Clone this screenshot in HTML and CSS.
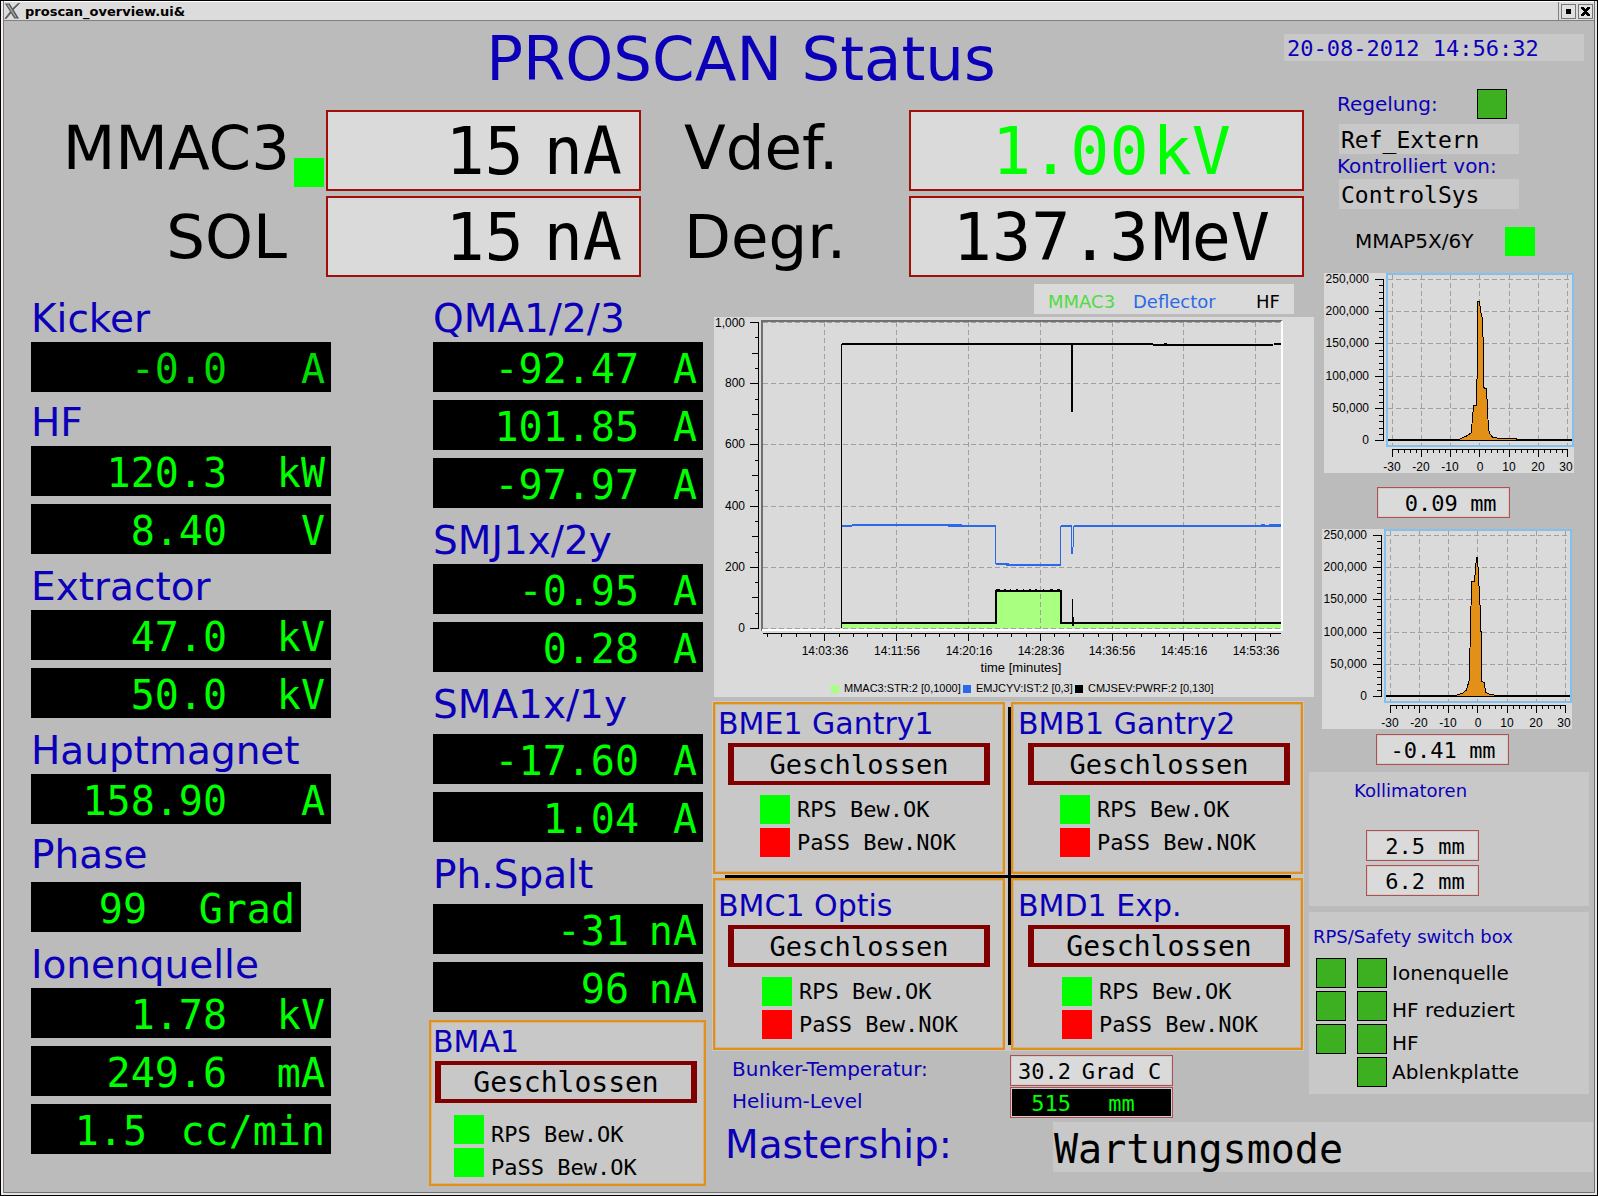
FILE: index.html
```
<!DOCTYPE html>
<html lang="de">
<head>
<meta charset="utf-8">
<title>proscan_overview.ui&amp;</title>
<link rel="stylesheet" href="styles.css">
</head>
<body>
<div class="window">
  <div class="titlebar">
    <svg class="titlebar-logo" viewBox="0 0 17 16" aria-hidden="true"><path d="M1 0h5l10 16h-5z" fill="#555"/><path d="M15 0h1.500L9 7.500 8.300 6.300zM1 16h1.500L8 9.200 7.300 8z" fill="#555" stroke="#666" stroke-width="1"/><path d="M3 1h2l8.500 14h-1.500z" fill="#aaa"/></svg>
    <span class="titlebar-text">proscan_overview.ui&amp;</span>
    <div class="titlebar-buttons">
      <button type="button" aria-label="Maximieren"><svg viewBox="0 0 11 11"><path d="M3 3h5v5H3z"/></svg></button>
      <button type="button" aria-label="Schliessen"><svg viewBox="0 0 11 11"><path d="M1 1h3v1h1v1h1V2h1V1h3v2H9v1H8v1H7v1h1v1h1v1h1v2H7V9H6V8H5v1H4v1H1V8h1V7h1V6h1V5H3V4H2V3H1z"/></svg></button>
    </div>
  </div>

  <header class="header">
    <h1>PROSCAN Status</h1>
    <time class="field clock">20-08-2012 14:56:32</time>
  </header>

  <main class="board">
    <section class="beam">
      <div class="beam-label beam-label-right beam-label-lamp"><span>MMAC3</span><i class="led led-on beam-led"></i></div>
      <div class="beam-value beam-current"><span>15</span><span>nA</span></div>
      <div class="beam-label beam-label-lamp">Vdef.</div>
      <div class="beam-value beam-voltage is-live"><span class="num">1.00</span><span>kV</span></div>
      <div class="beam-label beam-label-right beam-label-plain"><span>SOL</span></div>
      <div class="beam-value beam-current"><span>15</span><span>nA</span></div>
      <div class="beam-label">Degr.</div>
      <div class="beam-value beam-voltage"><span class="num">137.3</span><span>MeV</span></div>
    </section>

    <section class="readings readings-main">
      <div class="group">
        <h2>Kicker</h2>
        <div class="readout is-dim"><span>-0.0</span><span>A</span></div>
      </div>
      <div class="group">
        <h2>HF</h2>
        <div class="readout"><span>120.3</span><span>kW</span></div>
        <div class="readout"><span>8.40</span><span>V</span></div>
      </div>
      <div class="group spaced">
        <h2>Extractor</h2>
        <div class="readout"><span>47.0</span><span>kV</span></div>
        <div class="readout"><span>50.0</span><span>kV</span></div>
      </div>
      <div class="group spaced">
        <h2>Hauptmagnet</h2>
        <div class="readout"><span>158.90</span><span>A</span></div>
      </div>
      <div class="group tall">
        <h2>Phase</h2>
        <div class="readout readout-phase"><span>99</span><span>Grad</span></div>
      </div>
      <div class="group spaced">
        <h2>Ionenquelle</h2>
        <div class="readout"><span>1.78</span><span>kV</span></div>
        <div class="readout"><span>249.6</span><span>mA</span></div>
        <div class="readout readout-flow"><span>1.5</span><span>cc/min</span></div>
      </div>
    </section>

    <section class="readings readings-magnets">
      <div class="group">
        <h2>QMA1/2/3</h2>
        <div class="readout"><span>-92.47</span><span>A</span></div>
        <div class="readout"><span>101.85</span><span>A</span></div>
        <div class="readout"><span>-97.97</span><span>A</span></div>
      </div>
      <div class="group spaced">
        <h2>SMJ1x/2y</h2>
        <div class="readout"><span>-0.95</span><span>A</span></div>
        <div class="readout"><span>0.28</span><span>A</span></div>
      </div>
      <div class="group spaced tall">
        <h2>SMA1x/1y</h2>
        <div class="readout"><span>-17.60</span><span>A</span></div>
        <div class="readout"><span>1.04</span><span>A</span></div>
      </div>
      <div class="group spaced tall">
        <h2>Ph.Spalt</h2>
        <div class="readout readout-slit"><span>-31</span><span>nA</span></div>
        <div class="readout readout-slit"><span>96</span><span>nA</span></div>
      </div>
      <div class="stop stop-bma">
        <h3>BMA1</h3>
        <div class="stop-state wide">Geschlossen</div>
        <ul class="checks">
          <li><i class="led led-on"></i><span>RPS Bew.OK</span></li>
          <li><i class="led led-on"></i><span>PaSS Bew.OK</span></li>
        </ul>
      </div>
    </section>

    <section class="center">
      <div class="trend-key"><span class="key-mmac">MMAC3</span><span class="key-defl">Deflector</span><span class="key-hf">HF</span></div>
      <svg class="trend" viewBox="0 0 600 380" role="img" aria-label="Trend MMAC3, Deflector, HF">
        <path class="fill-mmac" d="M128 306H281V274H347V306H567V311H128Z"/>
        <path class="grid" d="M110.500 5V312M182.500 5V312M254.500 5V312M326.500 5V312M398.500 5V312M469.500 5V312M541.500 5V312M49 5.500H567M49 66.500H567M49 127.500H567M49 189.500H567M49 250.500H567M49 311.500H567"/>
        <path class="line-defl" d="M128 209H138M138 208H248M234 209H282M282 247H295M292 248H347M347 209H358M360 209H567M547 208H551M555 208H567"/>
        <path class="line-defl line-step" d="M281.500 209V247M346.500 248V209M357.500 209V237M358.500 237V230M359.500 230V209"/>
        <path class="line-black" d="M128 306H281.500V273.500H346.500V306H567M128 27H439M439 28H559M450 27H453M560 27H567M358 27V95"/>
        <path class="line-thin" d="M127.500 311V27M358.500 282V309M359.500 300V309"/>
        <path class="line-thin" d="M282 272.500H286M290 272.500H292M296 272.500H297M302 272.500H304M309 272.500H310M315 272.500H317M321 272.500H323M329 272.500H330M336 272.500H339M343 272.500H346"/>
        <path class="edge-dark" d="M47 4H568M48 3V314"/>
        <path class="edge-light" d="M48 313H568M567.500 4V314"/>
        <path class="axis" d="M44.500 5V312M36 5.500H45M36 66.500H45M36 127.500H45M36 189.500H45M36 250.500H45M36 311.500H45M38 36.500H45M38 97.500H45M38 158.500H45M38 219.500H45M38 280.500H45M41 20.500H45M41 51.500H45M41 82.500H45M41 112.500H45M41 143.500H45M41 173.500H45M41 204.500H45M41 235.500H45M41 265.500H45M41 296.500H45"/>
        <path class="axis" d="M49 316.500H567M110.500 316V324M182.500 316V324M254.500 316V324M326.500 316V324M398.500 316V324M469.500 316V324M541.500 316V324M53.500 316V320M67.500 316V320M82.500 316V320M96.500 316V320M125.500 316V320M139.500 316V320M153.500 316V320M168.500 316V320M197.500 316V320M211.500 316V320M225.500 316V320M240.500 316V320M269.500 316V320M283.500 316V320M297.500 316V320M312.500 316V320M340.500 316V320M355.500 316V320M369.500 316V320M384.500 316V320M412.500 316V320M427.500 316V320M441.500 316V320M455.500 316V320M484.500 316V320M498.500 316V320M513.500 316V320M527.500 316V320M556.500 316V320"/>
        <g class="tick tick-y"><text x="31" y="10">1,000</text><text x="31" y="70">800</text><text x="31" y="131">600</text><text x="31" y="193">400</text><text x="31" y="254">200</text><text x="31" y="315">0</text></g>
        <g class="tick tick-x"><text x="111" y="338">14:03:36</text><text x="183" y="338">14:11:56</text><text x="255" y="338">14:20:16</text><text x="327" y="338">14:28:36</text><text x="398" y="338">14:36:56</text><text x="470" y="338">14:45:16</text><text x="542" y="338">14:53:36</text><text class="axis-title" x="307" y="355">time [minutes]</text></g>
        <g class="caption"><path class="fill-mmac" d="M117 368h8v8h-8z"/><text x="130" y="375">MMAC3:STR:2 [0,1000]</text><path class="fill-defl" d="M249 368h8v8h-8z"/><text x="262" y="375">EMJCYV:IST:2 [0,3]</text><path d="M361 368h8v8h-8z"/><text x="374" y="375">CMJSEV:PWRF:2 [0,130]</text></g>
      </svg>
      <div class="stops">
        <div class="stop">
          <h3>BME1 Gantry1</h3>
          <div class="stop-state">Geschlossen</div>
          <ul class="checks">
            <li><i class="led led-on"></i><span>RPS Bew.OK</span></li>
            <li><i class="led led-bad"></i><span>PaSS Bew.NOK</span></li>
          </ul>
        </div>
        <div class="stop stop-right">
          <h3>BMB1 Gantry2</h3>
          <div class="stop-state">Geschlossen</div>
          <ul class="checks">
            <li><i class="led led-on"></i><span>RPS Bew.OK</span></li>
            <li><i class="led led-bad"></i><span>PaSS Bew.NOK</span></li>
          </ul>
        </div>
        <div class="stop stop-lower">
          <h3>BMC1 Optis</h3>
          <div class="stop-state">Geschlossen</div>
          <ul class="checks">
            <li><i class="led led-on"></i><span>RPS Bew.OK</span></li>
            <li><i class="led led-bad"></i><span>PaSS Bew.NOK</span></li>
          </ul>
        </div>
        <div class="stop stop-lower stop-right">
          <h3>BMD1 Exp.</h3>
          <div class="stop-state wide">Geschlossen</div>
          <ul class="checks">
            <li><i class="led led-on"></i><span>RPS Bew.OK</span></li>
            <li><i class="led led-bad"></i><span>PaSS Bew.NOK</span></li>
          </ul>
        </div>
      </div>
      <div class="bunker">
        <span class="note">Bunker-Temperatur:</span>
        <div class="meter meter-bunker"><span>30.2</span><span>Grad C</span></div>
        <span class="note">Helium-Level</span>
        <div class="meter meter-bunker meter-dark"><span>515</span><span>mm</span></div>
      </div>
    </section>

    <aside class="side">
      <div class="side-row"><span class="note">Regelung:</span><i class="led led-framed"></i></div>
      <div class="field side-field">Ref_Extern</div>
      <div class="note side-note">Kontrolliert von:</div>
      <div class="field side-field">ControlSys</div>
      <div class="side-row side-row-profile"><span class="note note-black">MMAP5X/6Y</span><i class="led led-on"></i></div>

      <svg class="profile" viewBox="0 0 250 200" role="img" aria-label="Profil X">
        <path class="grid" d="M68.500 2V172M97.500 2V172M126.500 2V172M155.500 2V172M185.500 2V172M214.500 2V172M243.500 2V172M64 6.500H248M64 38.500H248M64 70.500H248M64 103.500H248M64 135.500H248"/>
        <path class="peak" d="M119 167.500V166H136L142.500 163L147 160L148.500 146L149.500 132.500H152.500L153.500 81V28.500H155.500L156.500 38L158.500 46L159.500 81V114.500L162.500 116L163.500 136L164.500 156L166 161L168.500 164L175 165.500L192 166V167.500Z"/>
        <path class="base" d="M64 167H119M192 167H248"/>
        <rect class="frame" x="63" y="1" width="186" height="172"/>
        <path class="axis" d="M59.500 6V168M51 6.500H60M51 38.500H60M51 70.500H60M51 103.500H60M51 135.500H60M51 167.500H60M55 12.500H60M55 19.500H60M55 25.500H60M55 32.500H60M55 45.500H60M55 51.500H60M55 58.500H60M55 64.500H60M55 77.500H60M55 83.500H60M55 90.500H60M55 96.500H60M55 109.500H60M55 116.500H60M55 122.500H60M55 129.500H60M55 142.500H60M55 148.500H60M55 155.500H60M55 161.500H60"/>
        <path class="axis" d="M68 176.500H244M68.500 176V184M97.500 176V184M126.500 176V184M155.500 176V184M185.500 176V184M214.500 176V184M243.500 176V184M74.500 176V180M80.500 176V180M86.500 176V180M92.500 176V180M103.500 176V180M109.500 176V180M115.500 176V180M121.500 176V180M132.500 176V180M138.500 176V180M144.500 176V180M150.500 176V180M161.500 176V180M167.500 176V180M173.500 176V180M179.500 176V180M191.500 176V180M197.500 176V180M203.500 176V180M209.500 176V180M220.500 176V180M226.500 176V180M232.500 176V180M238.500 176V180"/>
        <g class="tick tick-y"><text x="45" y="10">250,000</text><text x="45" y="42">200,000</text><text x="45" y="74">150,000</text><text x="45" y="107">100,000</text><text x="45" y="139">50,000</text><text x="45" y="171">0</text></g>
        <g class="tick tick-x"><text x="68" y="198">-30</text><text x="97" y="198">-20</text><text x="126" y="198">-10</text><text x="156" y="198">0</text><text x="185" y="198">10</text><text x="214" y="198">20</text><text x="242" y="198">30</text></g>
      </svg>
      <div class="meter meter-profile"><span>0.09</span><span>mm</span></div>

      <svg class="profile profile-second" viewBox="0 0 250 200" role="img" aria-label="Profil Y">
        <path class="grid" d="M68.500 2V172M97.500 2V172M126.500 2V172M155.500 2V172M185.500 2V172M214.500 2V172M243.500 2V172M64 6.500H248M64 38.500H248M64 70.500H248M64 103.500H248M64 135.500H248"/>
        <path class="peak" d="M113 167.500V166H135L141 164L144.500 161L147 152L148.500 102V103L149.500 52.500H152.500L153.500 40L154.500 28.500H155.500L156.500 47L157.500 66L158.500 85L159.500 119V152L162.500 154L163.500 163L167 165L172 166H190V167.500Z"/>
        <path class="base" d="M64 167H113M190 167H248"/>
        <rect class="frame" x="63" y="1" width="186" height="172"/>
        <path class="axis" d="M59.500 6V168M51 6.500H60M51 38.500H60M51 70.500H60M51 103.500H60M51 135.500H60M51 167.500H60M55 12.500H60M55 19.500H60M55 25.500H60M55 32.500H60M55 45.500H60M55 51.500H60M55 58.500H60M55 64.500H60M55 77.500H60M55 83.500H60M55 90.500H60M55 96.500H60M55 109.500H60M55 116.500H60M55 122.500H60M55 129.500H60M55 142.500H60M55 148.500H60M55 155.500H60M55 161.500H60"/>
        <path class="axis" d="M68 176.500H244M68.500 176V184M97.500 176V184M126.500 176V184M155.500 176V184M185.500 176V184M214.500 176V184M243.500 176V184M74.500 176V180M80.500 176V180M86.500 176V180M92.500 176V180M103.500 176V180M109.500 176V180M115.500 176V180M121.500 176V180M132.500 176V180M138.500 176V180M144.500 176V180M150.500 176V180M161.500 176V180M167.500 176V180M173.500 176V180M179.500 176V180M191.500 176V180M197.500 176V180M203.500 176V180M209.500 176V180M220.500 176V180M226.500 176V180M232.500 176V180M238.500 176V180"/>
        <g class="tick tick-y"><text x="45" y="10">250,000</text><text x="45" y="42">200,000</text><text x="45" y="74">150,000</text><text x="45" y="107">100,000</text><text x="45" y="139">50,000</text><text x="45" y="171">0</text></g>
        <g class="tick tick-x"><text x="68" y="198">-30</text><text x="97" y="198">-20</text><text x="126" y="198">-10</text><text x="156" y="198">0</text><text x="185" y="198">10</text><text x="214" y="198">20</text><text x="242" y="198">30</text></g>
      </svg>
      <div class="meter meter-profile meter-second"><span>-0.41</span><span>mm</span></div>

      <div class="panel collimators">
        <h4>Kollimatoren</h4>
        <div class="meter meter-collimator"><span>2.5</span><span>mm</span></div>
        <div class="meter meter-collimator"><span>6.2</span><span>mm</span></div>
      </div>

      <div class="panel switchbox">
        <h4>RPS/Safety switch box</h4>
        <ul>
          <li><i class="led led-framed"></i><i class="led led-framed"></i><span>Ionenquelle</span></li>
          <li class="low"><i class="led led-framed"></i><i class="led led-framed"></i><span>HF reduziert</span></li>
          <li class="low"><i class="led led-framed"></i><i class="led led-framed"></i><span>HF</span></li>
          <li><i class="led led-none"></i><i class="led led-framed"></i><span>Ablenkplatte</span></li>
        </ul>
      </div>
    </aside>

    <footer class="mastership">
      <h2>Mastership:</h2>
      <div class="field">Wartungsmode</div>
    </footer>
  </main>
</div>
</body>
</html>
```

FILE: styles.css
```
:root {
  --blue: #0b00b8;
  --green: #00ff00;
  --field: #c8c8c8;
  --light: #dadada;
  --mono: "DejaVu Sans Mono", monospace;
  --arial: "Liberation Sans", Arial, sans-serif;
}

* { box-sizing: border-box; }

body {
  margin: 0;
  background: #bbb;
  color: #000;
  font-family: "DejaVu Sans", sans-serif;
}

h1, h2, h3, h4, ul { margin: 0; padding: 0; font-weight: normal; }
ul { list-style: none; }

.window {
  display: flex;
  flex-direction: column;
  min-height: 100vh;
  border: 1px solid #000;
  box-shadow: inset 2px 0 #f4f0f0, inset -2px -2px #e4e4e4, inset 3px 0 #807878, inset -3px -3px #707070;
  padding: 0 3px 3px;
}

/* Window title bar */
.titlebar {
  display: flex;
  align-items: center;
  height: 20px;
  background: #dcdcdc;
  border-top: 1px solid #fff;
  border-bottom: 1px solid #808080;
}
.titlebar-logo { width: 16px; height: 16px; }
.titlebar-text { flex: 1; margin-left: 5px; padding-top: 2px; font-size: 13px; font-weight: bold; line-height: 16px; }
.titlebar-buttons {
  display: flex;
  gap: 2px;
  align-self: stretch;
  padding: 2px 1px 0 2px;
  border-left: 1px solid #808080;
}
.titlebar-buttons button {
  width: 15px;
  height: 15px;
  padding: 1px;
  border: 1px solid #777;
  background: #e0e0e0;
}
.titlebar-buttons svg { display: block; width: 11px; height: 11px; }

/* Header */
.header {
  display: grid;
  grid-template-columns: 194fr 1086fr 300fr 10fr;
  height: 67px;
}
.header h1 {
  grid-column: 2;
  padding-top: 3px;
  color: var(--blue);
  font-size: 61px;
  line-height: 70px;
  text-align: center;
  white-space: nowrap;
}
.field { background: var(--field); font-family: var(--mono); white-space: nowrap; }
.clock {
  align-self: start;
  height: 27px;
  margin-top: 13px;
  padding-left: 3px;
  color: var(--blue);
  font-size: 22px;
  line-height: 29px;
}

.board {
  flex: 1;
  display: grid;
  grid-template-columns: 425fr 283fr 597fr 285fr;
  grid-template-rows: auto auto 1fr;
  align-items: start;
}

/* Status lamps */
.led { flex: none; display: block; width: 30px; height: 29px; }
.led-on { background: var(--green); }
.led-bad { background: #f00; }
.led-framed { height: 30px; border: 1px solid #000; background: #3cb020; }

/* Beam currents and energy */
.beam {
  grid-area: 1 / 1 / 2 / 4;
  display: grid;
  grid-template-columns: 322fr 315fr 268fr 395fr 5fr;
  grid-auto-rows: 81px;
  gap: 5px 0;
  padding: 22px 0 7px;
}
.beam-label {
  display: flex;
  align-items: center;
  padding-left: 43px;
  font-size: 61px;
  line-height: 72px;
  white-space: nowrap;
}
.beam-label-lamp { line-height: 68px; align-items: flex-start; padding-top: 4px; }
.beam-label-right { justify-content: flex-end; grid-column: 1; gap: 4px; padding-left: 0; padding-right: 2px; }
.beam-label-plain { padding-right: 39px; }
.beam-led { align-self: flex-end; margin-bottom: 4px; }
.beam-value {
  display: flex;
  align-items: center;
  justify-content: flex-end;
  border: 2px solid #a01008;
  background: var(--light);
  padding-top: 2px;
  font: 65px/76px var(--mono);
  white-space: nowrap;
}
.beam-current { gap: 20px; padding-right: 17px; }
.beam-voltage { display: grid; grid-template-columns: 240fr 151fr; gap: 4px; }
.beam-voltage .num { text-align: right; }
.is-live { color: var(--green); }

/* Green-on-black readouts */
.readings { padding-top: 14px; grid-row: 2 / 4; }
.readings-main { grid-column: 1; padding-left: 27px; padding-right: 98px; }
.readings-magnets { grid-column: 2; }
.readings-magnets .group { padding: 0 9px 0 4px; }
.group { margin-top: 10px; }
.group:first-child { margin-top: 0; }
.group.spaced { margin-top: 12px; }
.group h2, .mastership h2 {
  color: var(--blue);
  font-size: 39px;
  line-height: 42px;
  white-space: nowrap;
}
.group h2 { margin-bottom: 2px; }
.group.tall h2 { margin-bottom: 6px; }
.readings-magnets .tall h2 { margin-bottom: 8px; }
.readout {
  display: grid;
  grid-template-columns: 2fr 1fr;
  height: 50px;
  padding-top: 4px;
  background: #000;
  color: var(--green);
  font: 40px/46px var(--mono);
  text-align: right;
  white-space: nowrap;
}
.readout + .readout { margin-top: 8px; }
.readout span:first-child { padding-right: 4px; }
.readout span:last-child { padding-right: 6px; }
.readings-magnets .readout { grid-template-columns: 210fr 60fr; }
.readings-magnets .readout-slit { grid-template-columns: 200fr 70fr; }
.readings .readout-phase { width: 90%; grid-template-columns: 120fr 150fr; }
.readings .readout-flow { grid-template-columns: 120fr 180fr; }
.is-dim { color: #00dc00; }

/* Beam stops */
.stop {
  height: 172px;
  padding-top: 2px;
  border: 2px solid #e39018;
  background: var(--field);
  box-shadow: inset 0 0 0 1px #cfb48c;
}
.stop h3 {
  padding-left: 3px;
  margin-bottom: 1px;
  color: var(--blue);
  font-size: 30px;
  line-height: 36px;
  white-space: nowrap;
}
.stop-state {
  height: 42px;
  margin: 0 13px 10px;
  border: solid #800000;
  border-width: 4px 6px;
  font: 27px/36px var(--mono);
  text-align: center;
}
.stop-state.wide { font-size: 28px; }
.stop-right { padding-left: 2px; }
.stop-right .stop-state { margin-right: 11px; }
.stop-lower { padding-top: 8px; }
.checks { display: grid; gap: 4px; padding-left: 45px; }
.checks li { display: flex; align-items: center; gap: 7px; font: 22px/28px var(--mono); white-space: nowrap; }
.stop-lower .checks { padding-left: 47px; }
.stop-bma { height: 166px; margin: 8px 6px 0 0; }
.stop-bma .stop-state { margin: 0 7px 12px 4px; }
.stop-bma h3 { padding-left: 2px; }
.stop-bma .checks { padding-left: 23px; }
.stop-bma .checks li { align-items: flex-end; line-height: 18px; }

.stops {
  display: grid;
  grid-template-columns: 1fr 1fr;
  gap: 4px 6px;
  margin: 4px 5px 4px 0;
  padding: 1px;
  background:
    linear-gradient(#000, #000) calc(50% + 1px) 50% / 3px calc(100% - 12px) no-repeat,
    linear-gradient(#000, #000) 50% 50% / calc(100% - 26px) 3px no-repeat,
    var(--field);
}

/* Trend chart */
.center { grid-area: 2 / 3; }
.trend-key {
  display: grid;
  grid-template-columns: 85fr 123fr 38fr;
  width: 260px;
  height: 30px;
  margin: 0 15px 3px auto;
  padding-left: 14px;
  background: var(--light);
  font-size: 18px;
  line-height: 35px;
}
.key-mmac { color: #50dc40; }
.key-defl { color: #2a6ae8; }
.trend { display: block; width: calc(100% + 3px); margin-left: 2px; background: var(--light); }
.grid { stroke: #a0a0a0; stroke-dasharray: 5 3; fill: none; shape-rendering: crispEdges; }
.axis { stroke: #000; fill: none; shape-rendering: crispEdges; }
.fill-mmac { fill: #a8ff80; }
.fill-defl { fill: #2a6ae8; }
.line-defl { fill: none; stroke: #2a6ae8; stroke-width: 2; shape-rendering: crispEdges; }
.line-step { stroke-width: 1; }
.line-black { fill: none; stroke: #000; stroke-width: 2; shape-rendering: crispEdges; }
.line-thin { fill: none; stroke: #000; shape-rendering: crispEdges; }
.edge-dark { fill: none; stroke: #707070; stroke-width: 2; shape-rendering: crispEdges; }
.edge-light { fill: none; stroke: #fff; stroke-width: 2; shape-rendering: crispEdges; }
.tick text { font: 12px var(--arial); }
.tick .axis-title { font-size: 13px; }
.tick-y { text-anchor: end; }
.tick-x { text-anchor: middle; }
.caption text { font: 11px var(--arial); }

/* Bunker values */
.note, .panel { font-size: 20px; line-height: 24px; }
.note { color: var(--blue); white-space: nowrap; }
.note-black { color: #000; }
.bunker {
  display: grid;
  grid-template-columns: 278fr 163fr 136fr;
  gap: 1px 0;
  padding-left: 20px;
}
.bunker .note { grid-column: 1; line-height: 28px; }
.meter {
  display: grid;
  height: 31px;
  border: 1px solid #b05050;
  background: var(--light);
  box-shadow: inset 0 0 0 1px #d0cccc;
  font: 22px/32px var(--mono);
  white-space: nowrap;
}
.meter span:first-child { text-align: right; }
.meter span:last-child { text-align: center; }
.meter-bunker { grid-template-columns: 60fr 101fr; }
.meter-dark { background: #000; color: var(--green); }

/* Right-hand column */
.side { grid-area: 1 / 4 / 3 / 5; }
.side-row { display: flex; align-items: center; height: 32px; margin-bottom: 4px; padding-left: 28px; }
.side-row .note { width: 140px; }
.side-row-profile { margin: 16px 0 16px; padding-left: 46px; }
.side-row-profile .note { width: 150px; }
.side-field { width: 180px; height: 30px; margin-left: 30px; padding-left: 2px; font-size: 23px; line-height: 32px; }
.side-note { padding-left: 28px; line-height: 25px; }
.profile { display: block; width: calc(100% - 35px); margin-left: 15px; background: var(--light); }
.profile-second { margin-top: 11px; margin-left: 13px; }
.frame { fill: none; stroke: #84c0ec; stroke-width: 2; shape-rendering: crispEdges; }
.peak { fill: #e39018; stroke: #000; stroke-width: 1; shape-rendering: crispEdges; }
.base { stroke: #000; stroke-width: 2; shape-rendering: crispEdges; }
.meter-profile { width: 133px; margin: 14px 0 0 68px; grid-template-columns: 81fr 52fr; }
.meter-second { margin-top: 5px; margin-left: 67px; }
.panel { margin-right: 5px; background: var(--field); }
.panel h4 { color: var(--blue); font-size: 18px; white-space: nowrap; }
.collimators { height: 134px; margin-top: 7px; padding: 7px 0 0 57px; }
.collimators h4 { margin: 0 0 27px -12px; }
.meter-collimator { width: 113px; margin-bottom: 4px; grid-template-columns: 59fr 54fr; }
.switchbox { height: 182px; margin-top: 6px; padding: 13px 4px 0; }
.switchbox ul { display: grid; gap: 3px; margin-top: 9px; padding-left: 3px; }
.switchbox li { display: flex; align-items: center; gap: 11px; line-height: 22px; white-space: nowrap; }
.switchbox li.low { align-items: flex-end; }
.switchbox li span { margin-left: -6px; }

/* Mastership line */
.mastership {
  grid-area: 3 / 3 / 4 / 5;
  display: grid;
  grid-template-columns: 328fr 540fr 1fr;
  margin-top: 4px;
  padding-left: 13px;
}
.mastership h2 { line-height: 46px; }
.mastership .field { height: 50px; padding-left: 1px; font-size: 40px; line-height: 55px; }
```
